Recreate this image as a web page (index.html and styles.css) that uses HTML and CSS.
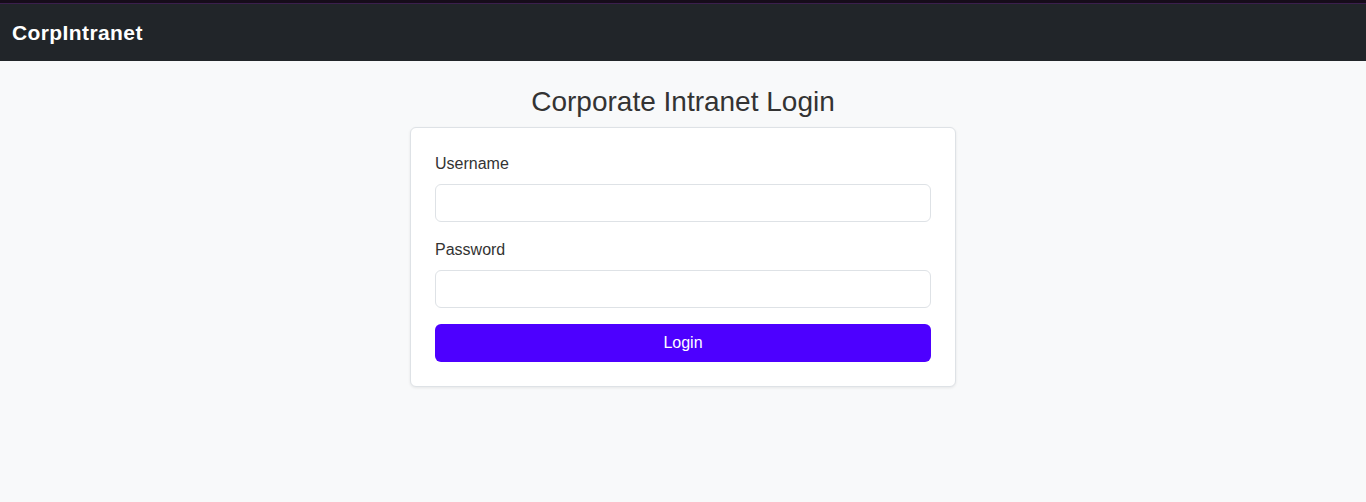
FILE: index.html
```html
<!DOCTYPE html>
<html lang="en">
<head>
    <meta charset="UTF-8">
    <meta name="viewport" content="width=device-width, initial-scale=1.0">
    <title>CorpIntranet - Login</title>
    <link rel="stylesheet" href="styles.css">
</head>
<body>
    <nav class="navbar">
        <a class="brand" href="#">CorpIntranet</a>
    </nav>

    <main class="page">
        <h2 class="page-title">Corporate Intranet Login</h2>

        <div class="card">
            <form class="login-form" onsubmit="return false;">
                <div class="field">
                    <label for="username">Username</label>
                    <input type="text" id="username" name="username">
                </div>
                <div class="field">
                    <label for="password">Password</label>
                    <input type="password" id="password" name="password">
                </div>
                <button type="submit" class="btn-login">Login</button>
            </form>
        </div>
    </main>
</body>
</html>
```

FILE: styles.css
```css
* {
    margin: 0;
    padding: 0;
    box-sizing: border-box;
}

body {
    min-height: 100vh;
    background: #f8f9fa;
    font-family: 'Liberation Sans', Arial, sans-serif;
    color: #333;
}

.navbar {
    height: 61px;
    display: flex;
    align-items: center;
    padding: 2px 12px 0;
    background: #212529;
    border-top: 3px solid #160c1a;
    box-shadow: inset 0 1px 0 #3b1f4d;
}

.brand {
    color: #fff;
    font-size: 21px;
    font-weight: bold;
    letter-spacing: 0.4px;
    text-decoration: none;
}

.page {
    display: flex;
    flex-direction: column;
    align-items: center;
    padding-top: 24px;
}

.page-title {
    font-size: 28px;
    font-weight: normal;
    line-height: 34px;
    color: #333;
    margin-bottom: 8px;
}

.card {
    width: 546px;
    background: #fff;
    border: 1px solid #dee2e6;
    border-radius: 6px;
    box-shadow: 0 1px 3px rgba(0, 0, 0, 0.08);
    padding: 24px;
}

.field {
    margin-bottom: 16px;
}

label {
    display: block;
    font-size: 16px;
    line-height: 24px;
    margin-bottom: 8px;
    color: #333;
}

input {
    display: block;
    width: 100%;
    height: 38px;
    padding: 6px 12px;
    font-size: 16px;
    border: 1px solid #dee2e6;
    border-radius: 6px;
    outline: none;
    background: #fff;
}

input:focus {
    border-color: #86b7fe;
}

.btn-login {
    display: block;
    width: 100%;
    height: 38px;
    border: none;
    border-radius: 6px;
    background: #4d00ff;
    color: #fff;
    font-family: inherit;
    font-size: 16px;
    cursor: pointer;
}

.btn-login:hover {
    background: #4200dd;
}
```
